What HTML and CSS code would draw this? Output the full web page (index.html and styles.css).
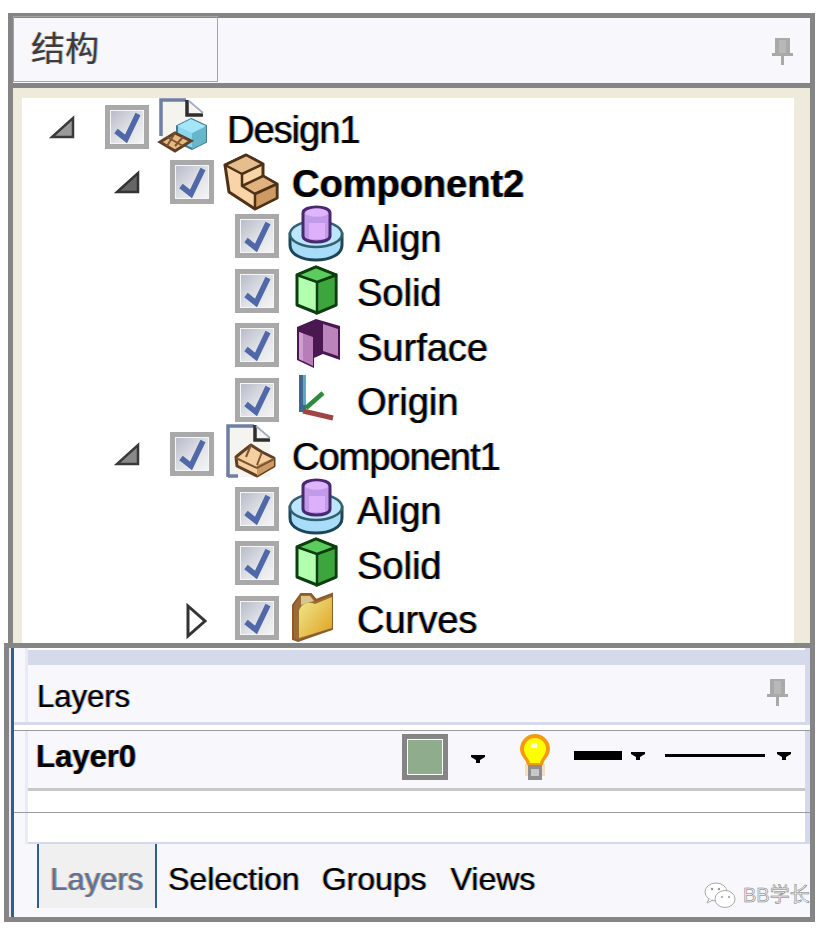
FILE: index.html
```html
<!DOCTYPE html>
<html lang="en">
<head>
<meta charset="utf-8">
<title>Structure and Layers</title>
<link rel="stylesheet" href="styles.css">
</head>
<body>
<svg class="defs" width="0" height="0" aria-hidden="true">
  <defs>
    <linearGradient id="boxfill" x1="0" y1="0" x2="1" y2="1">
      <stop offset="0" stop-color="#b8bcc8"/><stop offset=".55" stop-color="#e0e2e7"/><stop offset="1" stop-color="#f4f4f4"/>
    </linearGradient>
    <linearGradient id="folderfill" x1="0" y1="0" x2="1" y2="1">
      <stop offset="0" stop-color="#f0ea90"/><stop offset="1" stop-color="#dfa020"/>
    </linearGradient>
    <g id="check">
      <rect x="2.5" y="2.5" width="39" height="39" fill="#f6f6f6" stroke="#a9a9a9" stroke-width="5"/>
      <rect x="6" y="6" width="32" height="32" fill="url(#boxfill)"/>
      <path d="M11 26 L21 34 L33 9" fill="none" stroke="#5068a8" stroke-width="5.5"/>
    </g>
    <g id="tan-box">
      <path d="M1 43 L16 34 L32 42 L16 52 Z" fill="#e8b880" stroke="#5f4026" stroke-width="3"/>
      <path d="M8 38 L24 47 M16 34 L8 47 M24 38 L16 47" stroke="#7c5630" stroke-width="2" fill="none"/>
    </g>
    <g id="design">
      <path d="M2 0 H27 L43 16 V40 H2 Z" fill="#f5f3ee"/>
      <path d="M2 36 V0 H27" fill="none" stroke="#6f7fa2" stroke-width="3.5"/>
      <path d="M28 0 V15 H44" fill="none" stroke="#2e2e2e" stroke-width="3.5"/>
      <path d="M30 1 L44 13" stroke="#a4aec4" stroke-width="2"/>
      <path d="M32 19 L47 26 V42 L33 49 L18 42 V26 Z" fill="#8ad6ec" stroke="#3f7a90" stroke-width="2"/>
      <path d="M33 33 L47 26 V42 L33 49 Z" fill="#68b6cc"/>
      <path d="M18 26 L32 19 L47 26 L33 33 Z" fill="#a2e6f8"/>
      <use href="#tan-box" transform="translate(0,-1)"/>
    </g>
    <g id="block">
      <path d="M1 10 L22 0 L39 9 V21 L53 29 V43 L31 54 L5 37 Z" fill="#f8d4a6" stroke="#4e3218" stroke-width="3" stroke-linejoin="round"/>
      <path d="M1 10 L18 19 L39 9 L22 0 Z" fill="#e6bd8c" stroke="#4e3218" stroke-width="2.5" stroke-linejoin="round"/>
      <path d="M18 19 V31 L31 39 L53 29 L39 21 L18 31" fill="#e0b27e" stroke="#4e3218" stroke-width="2.5" stroke-linejoin="round"/>
      <path d="M31 39 V54 L53 43 V29 Z" fill="#cc9a62" stroke="#4e3218" stroke-width="2.5" stroke-linejoin="round"/>
    </g>
    <g id="align">
      <path d="M1 25 V36 C1 56 53 56 53 36 V25 Z" fill="#a8dcf8" stroke="#1c4656" stroke-width="3"/>
      <ellipse cx="27" cy="25" rx="26" ry="13" fill="#bce6fc" stroke="#34606f" stroke-width="2.5"/>
      <path d="M14 4 C14 -4 41 -4 41 4 V27 C41 35 14 35 14 27 Z" fill="#c29aea" stroke="#48286e" stroke-width="3"/>
      <path d="M16 4 C18 -2 38 -2 39 4 C38 9 18 9 16 4 Z" fill="#deb4fc"/>
      <path d="M20 14 H36 V30 H20 Z" fill="#dcb0fa"/>
    </g>
    <g id="solid">
      <path d="M27 3 L47 11 V41 L28 49 L8 41 V11 Z" fill="#b2ffb0" stroke="#0e3e10" stroke-width="3" stroke-linejoin="round"/>
      <path d="M28 18 L47 11 V41 L28 49 Z" fill="#3ca53c" stroke="#0e3e10" stroke-width="2.5"/>
      <path d="M8 11 L27 3 L47 11 L28 18 Z" fill="#5ccc5c" stroke="#0e3e10" stroke-width="2.5" stroke-linejoin="round"/>
    </g>
    <g id="surface">
      <path d="M8 9 L27 1 L51 8 V42 L34 36 L25 40 V50 L8 42 Z" fill="#4a1850"/>
      <path d="M10 14 L24 19 V48 L10 41 Z" fill="#b77db8"/>
      <path d="M10 14 L14 15.5 V43 L10 41 Z" fill="#cfa0cf"/>
      <path d="M34 6 L49 11 V38 L34 33 Z" fill="#bb85bb"/>
    </g>
    <g id="origin">
      <rect x="10" y="2" width="7" height="37" fill="#39698f"/>
      <rect x="14" y="2" width="3" height="30" fill="#63a6c4"/>
      <path d="M17 35 L34 20" stroke="#2e8a3e" stroke-width="4.5" fill="none"/>
      <path d="M14 38 L44 45" stroke="#a04444" stroke-width="5" fill="none"/>
    </g>
    <g id="doc-part">
      <path d="M3 -2 H30 L46 13 V50 H3 Z" fill="#f6f4f0"/>
      <path d="M4 50 V-1 H30 M4 49 H14" fill="none" stroke="#6f7fa2" stroke-width="3.5"/>
      <path d="M31 -2 V13 H46" fill="none" stroke="#2e2e2e" stroke-width="3.5"/>
      <path d="M32 -1 L46 11" stroke="#a4aec4" stroke-width="2"/>
      <path d="M12 30 L18 25 L27 18 L38 25 L50 31 V39 L33 49 L13 39 Z" fill="#f5cfa0" stroke="#5f4026" stroke-width="3" stroke-linejoin="round"/>
      <path d="M33 38 V49 L50 39 V31 Z" fill="#cc9a62"/>
      <path d="M12 31 L33 41 L50 32 M27 18 L22 30 M38 25 L33 38" fill="none" stroke="#7c5630" stroke-width="2"/>
    </g>
    <g id="folder">
      <path d="M4 14 L12 3 L22 3 L27 9 L43 3 V38 L9 50 L4 48 Z" fill="#9c6a34" stroke="#8a5c2c" stroke-width="2"/>
      <path d="M10 20 C12 12 20 10 26 13 L43 6 V37 L10 47 Z" fill="url(#folderfill)"/>
      <path d="M12 5 H21 L25 10 L12 14 Z" fill="#d9c48c"/>
    </g>
    <g id="pin">
      <path d="M3 0 H18 V15 H3 Z M7 2 V14 H14 V2 Z" fill="#a9a9a9" fill-rule="evenodd"/>
      <rect x="7" y="2" width="7" height="13" fill="#b8b8b8"/>
      <rect x="0" y="15" width="21" height="3" fill="#a9a9a9"/>
      <rect x="9" y="18" width="3" height="9" fill="#a9a9a9"/>
    </g>
    <path id="tri-down" d="M0 0 H14 V2 L9 5 V8 H5 V5 L0 2 Z" fill="#000"/>
  </defs>
</svg>

<section class="panel structure">
  <header class="structure-head">
    <div class="title-tab">结构</div>
    <svg class="pin pin-top" viewBox="0 0 21 27"><use href="#pin"/></svg>
  </header>
  <div class="tree-frame">
    <ul class="tree">
      <li class="node lvl0">
        <span class="exp"><svg class="exp-icon" viewBox="0 0 24 54"><path d="M23 18 V37 H2 Z" fill="#9a9a9a" stroke="#3a3a3a" stroke-width="2.5"/></svg></span>
        <svg class="box" viewBox="0 0 44 44"><use href="#check"/></svg>
        <svg class="ico" viewBox="0 0 54 54"><use href="#design"/></svg>
        <span class="label label-tight">Design1</span>
      </li>
      <li class="node lvl1">
        <span class="exp"><svg class="exp-icon" viewBox="0 0 24 54"><path d="M23 18 V37 H2 Z" fill="#666" stroke="#333" stroke-width="2.5"/></svg></span>
        <svg class="box" viewBox="0 0 44 44"><use href="#check"/></svg>
        <svg class="ico" viewBox="0 0 54 54"><use href="#block"/></svg>
        <span class="label label-bold">Component2</span>
      </li>
      <li class="node lvl2">
        <span class="exp"></span>
        <svg class="box" viewBox="0 0 44 44"><use href="#check"/></svg>
        <svg class="ico" viewBox="0 0 54 54"><use href="#align"/></svg>
        <span class="label">Align</span>
      </li>
      <li class="node lvl2">
        <span class="exp"></span>
        <svg class="box" viewBox="0 0 44 44"><use href="#check"/></svg>
        <svg class="ico" viewBox="0 0 54 54"><use href="#solid"/></svg>
        <span class="label">Solid</span>
      </li>
      <li class="node lvl2">
        <span class="exp"></span>
        <svg class="box" viewBox="0 0 44 44"><use href="#check"/></svg>
        <svg class="ico" viewBox="0 0 54 54"><use href="#surface"/></svg>
        <span class="label">Surface</span>
      </li>
      <li class="node lvl2">
        <span class="exp"></span>
        <svg class="box" viewBox="0 0 44 44"><use href="#check"/></svg>
        <svg class="ico" viewBox="0 0 54 54"><use href="#origin"/></svg>
        <span class="label">Origin</span>
      </li>
      <li class="node lvl1">
        <span class="exp"><svg class="exp-icon" viewBox="0 0 24 54"><path d="M23 18 V37 H2 Z" fill="#8a8a8a" stroke="#3a3a3a" stroke-width="2.5"/></svg></span>
        <svg class="box" viewBox="0 0 44 44"><use href="#check"/></svg>
        <svg class="ico" viewBox="0 0 54 54"><use href="#doc-part"/></svg>
        <span class="label label-tight">Component1</span>
      </li>
      <li class="node lvl2">
        <span class="exp"></span>
        <svg class="box" viewBox="0 0 44 44"><use href="#check"/></svg>
        <svg class="ico" viewBox="0 0 54 54"><use href="#align"/></svg>
        <span class="label">Align</span>
      </li>
      <li class="node lvl2">
        <span class="exp"></span>
        <svg class="box" viewBox="0 0 44 44"><use href="#check"/></svg>
        <svg class="ico" viewBox="0 0 54 54"><use href="#solid"/></svg>
        <span class="label">Solid</span>
      </li>
      <li class="node lvl2">
        <span class="exp"><svg class="exp-icon exp-open" viewBox="0 0 24 54"><path d="M2 15 L19 30 L2 45 Z" fill="#fff" stroke="#333" stroke-width="3"/></svg></span>
        <svg class="box" viewBox="0 0 44 44"><use href="#check"/></svg>
        <svg class="ico" viewBox="0 0 54 54"><use href="#folder"/></svg>
        <span class="label">Curves</span>
      </li>
    </ul>
  </div>
</section>

<section class="panel layers">
  <div class="layers-edge"></div>
  <div class="layers-main">
    <div class="layers-mid">
      <div class="strip"></div>
      <div class="layers-head">
        <span class="ui-text head-text">Layers</span>
        <svg class="pin pin-low" viewBox="0 0 21 27"><use href="#pin"/></svg>
      </div>
      <div class="gap-line"></div>
      <div class="layer-row">
        <span class="ui-text layer-name">Layer0</span>
        <span class="swatch"></span>
        <svg class="tri tri-a" viewBox="0 0 14 8"><use href="#tri-down"/></svg>
        <svg class="bulb" viewBox="0 0 32 46">
          <rect x="6" y="30" width="20" height="12" fill="#f8dcc0"/>
          <rect x="9" y="31" width="14" height="15" fill="#8e8e8e"/>
          <rect x="12" y="35" width="8" height="7" fill="#c8c8c8"/>
          <path d="M1 15 A15 15 0 0 1 31 15 C31 22 25 25 24 31 H8 C7 25 1 22 1 15 Z" fill="#f59a10"/>
          <path d="M5 15 A11 11 0 0 1 27 15 C27 21 22 24 21 29 H11 C10 24 5 21 5 15 Z" fill="#ffff00"/>
          <rect x="12" y="9" width="6" height="5" fill="#fffde0"/>
        </svg>
        <span class="weight-line"></span>
        <svg class="tri tri-b" viewBox="0 0 14 8"><use href="#tri-down"/></svg>
        <span class="style-line"></span>
        <svg class="tri tri-c" viewBox="0 0 14 8"><use href="#tri-down"/></svg>
      </div>
      <div class="empty-list"></div>
    </div>
    <nav class="tabs">
      <span class="tab tab-active">Layers</span>
      <span class="tab tab-sel">Selection</span>
      <span class="tab tab-grp">Groups</span>
      <span class="tab tab-view">Views</span>
      <span class="watermark">
        <svg class="wechat" viewBox="0 0 32 27">
          <ellipse cx="12" cy="10" rx="11" ry="9" fill="#fff" stroke="#aaa" stroke-width="1"/>
          <path d="M5 17 L3 21 L9 18" fill="#fff" stroke="#aaa"/>
          <ellipse cx="21" cy="17" rx="10" ry="8.5" fill="#fff" stroke="#aaa" stroke-width="1"/>
          <circle cx="8" cy="7" r="1.2" fill="#999"/><circle cx="15" cy="7" r="1.2" fill="#999"/>
          <circle cx="18" cy="15" r="1" fill="#999"/><circle cx="25" cy="15" r="1" fill="#999"/>
        </svg>
        <span class="wm-text">BB学长</span>
      </span>
    </nav>
  </div>
</section>
</body>
</html>
```
FILE: styles.css
```css
* { box-sizing: border-box; }
html, body { margin: 0; padding: 0; background: #fff; }
body {
  width: 834px;
  height: 932px;
  overflow: hidden;
  font-family: "Liberation Sans", "Noto Sans CJK SC", sans-serif;
  color: #000;
}
.defs { position: absolute; }
svg { display: block; overflow: visible; flex: none; }

.panel { border: 5px solid #858585; }

.structure {
  margin: 13px 0 0 8px;
  width: 807px;
  height: 631px;
  border-bottom: 0;
  display: flex;
  flex-direction: column;
}
.structure-head {
  height: 70px;
  flex: none;
  background: #f7f7fc;
  border-bottom: 5px solid #858585;
  display: flex;
  align-items: center;
  justify-content: space-between;
  padding-right: 17px;
}
.title-tab {
  width: 205px;
  height: 66px;
  margin-top: -3px;
  border: 1px solid #a4a4a4;
  padding-left: 17px;
  font-size: 34px;
  line-height: 60px;
  color: #3c3c3c;
  font-family: "Noto Sans CJK SC", sans-serif;
  text-shadow: -1px 0 rgba(230, 150, 60, .45), 1px 0 rgba(40, 120, 220, .45);
}
.pin { width: 21px; height: 27px; }
.pin-top { margin-top: 1px; }

.tree-frame {
  flex: 1;
  background: #eeebdd;
  padding: 10px 16px 0 9px;
  min-height: 0;
}
.tree {
  list-style: none;
  margin: 0;
  padding: 2px 0 0;
  height: 100%;
  background: #fff;
  overflow: hidden;
}
.node {
  height: 54.5px;
  display: flex;
  align-items: center;
}
.lvl0 { padding-left: 28px; }
.lvl1 { padding-left: 93px; }
.lvl2 { padding-left: 158px; }
.exp { width: 55px; flex: none; align-self: stretch; }
.exp-icon { width: 24px; height: 54px; }
.exp-open { margin-left: 6px; }
.box { width: 44px; height: 44px; }
.ico { width: 54px; height: 54px; margin-left: 10px; }
.label {
  margin-left: 14px;
  margin-top: 5px;
  font-size: 38px;
  line-height: 54px;
  white-space: nowrap;
  text-shadow: -1px 0 rgba(235, 150, 50, .7), 1px 0 rgba(20, 120, 220, .7);
}
.label-tight { letter-spacing: -1px; }
.label-bold { font-weight: 700; }

.layers {
  margin-left: 4px;
  margin-top: -1px;
  width: 811px;
  height: 279px;
  display: flex;
  background: #f7f7fc;
  position: relative;
}
.layers-edge {
  width: 5px;
  flex: none;
  border-left: 2px solid #e8ebf6;
  background: #2f5f8f;
}
.layers-main { flex: 1; min-width: 0; display: flex; flex-direction: column; }
.layers-mid {
  margin-left: 11px;
  border-left: 3px solid #e8ebf6;
  border-right: 5px solid #d4d9ec;
  background: #f7f7fc;
  display: flex;
  flex-direction: column;
}
.strip {
  height: 17px;
  background: #d4d9ec;
  border-top: 2px solid #fff;
}
.layers-head {
  height: 57px;
  display: flex;
  align-items: center;
  justify-content: space-between;
  padding: 0 17px 0 9px;
}
.pin-low { margin-top: -2px; }
.ui-text {
  font-size: 31px;
  line-height: 57px;
  text-shadow: -1px 0 rgba(235, 150, 50, .65), 1px 0 rgba(20, 120, 220, .65);
}
.head-text { margin-top: 6px; }
.gap-line {
  height: 9px;
  background: #fff;
  border-top: 3px solid #d4d9ec;
  border-bottom: 1px solid #9a9a9a;
  margin-left: -14px;
  margin-right: -5px;
}
.layer-row {
  height: 60px;
  display: flex;
  align-items: center;
  padding-left: 8px;
  border-bottom: 3px solid #c8c8c8;
}
.layer-name { font-weight: 700; width: 366px; flex: none; margin-top: -6px; }
.swatch {
  width: 46px;
  height: 46px;
  flex: none;
  margin-top: -5px;
  border: 5px solid #858585;
  background: #8fac8c;
  box-shadow: inset 0 0 0 1px #fff;
}
.tri { width: 14px; height: 8px; }
.tri-a { margin-left: 23px; margin-top: -2px; }
.bulb { width: 32px; height: 46px; margin-left: 34px; margin-top: -5px; }
.weight-line { width: 48px; height: 9px; background: #000; margin-left: 23px; margin-top: -8px; flex: none; }
.tri-b { margin-left: 9px; margin-top: -8px; }
.style-line { width: 100px; height: 3px; background: #000; margin-left: 20px; margin-top: -8px; flex: none; }
.tri-c { margin-left: 12px; margin-top: -8px; }
.empty-list {
  height: 53px;
  background: #fff;
  border-bottom: 2px solid #d4d9ec;
  position: relative;
}
.empty-list::after {
  content: "";
  position: absolute;
  left: -14px;
  right: -5px;
  top: 21px;
  height: 1px;
  background: #9a9a9a;
}
.tabs {
  flex: 1;
  display: flex;
  align-items: flex-start;
  padding-left: 23px;
  position: relative;
}
.tab {
  font-size: 32px;
  line-height: 71px;
  white-space: nowrap;
  text-shadow: -1px 0 rgba(235, 150, 50, .65), 1px 0 rgba(20, 120, 220, .65);
}
.tab-active {
  width: 120px;
  height: 64px;
  background: #f0f0f0;
  border-left: 2px solid #2f5f8f;
  border-right: 2px solid #2f5f8f;
  padding-left: 11px;
  color: #66708e;
  font-size: 31px;
}
.tab-sel { margin-left: 11px; }
.tab-grp { margin-left: 22px; }
.tab-view { margin-left: 24px; }
.watermark {
  position: absolute;
  left: 690px;
  top: 38px;
  display: flex;
  align-items: center;
  gap: 7px;
  white-space: nowrap;
}
.wechat { width: 32px; height: 27px; }
.wm-text {
  font-size: 20px;
  line-height: 27px;
  color: #eeeeee;
  -webkit-text-stroke: .5px #777;
}
```
